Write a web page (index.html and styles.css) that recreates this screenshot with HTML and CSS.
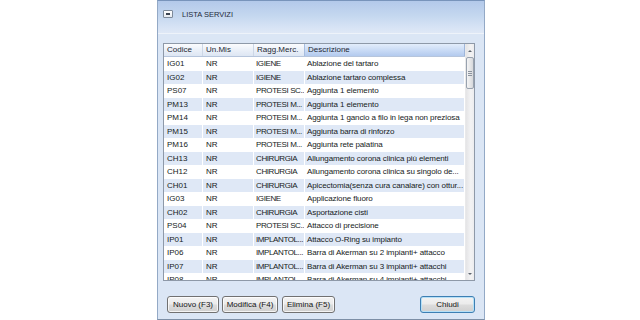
FILE: index.html
```html
<!DOCTYPE html>
<html lang="it">
<head>
<meta charset="utf-8">
<title>Lista servizi</title>
<link rel="stylesheet" href="styles.css">
</head>
<body>
<div class="win">
  <div class="titlebar">
    <span class="sysicon"><span class="bar"></span></span>
    <span class="title">LISTA SERVIZI</span>
  </div>
  <div class="content">
    <div class="list">
      <div class="grid">
        <div class="head">
          <div class="hc">Codice</div>
          <div class="hc">Un.Mis</div>
          <div class="hc">Ragg.Merc.</div>
          <div class="hc hc-active">Descrizione</div>
        </div>
        <div class="rows">
          <div class="row"><div class="c">IG01</div><div class="c">NR</div><div class="c g">IGIENE</div><div class="c d">Ablazione del tartaro</div></div>
          <div class="row alt"><div class="c">IG02</div><div class="c">NR</div><div class="c g">IGIENE</div><div class="c d">Ablazione tartaro complessa</div></div>
          <div class="row"><div class="c">PS07</div><div class="c">NR</div><div class="c g">PROTESI SC...</div><div class="c d">Aggiunta 1 elemento</div></div>
          <div class="row alt"><div class="c">PM13</div><div class="c">NR</div><div class="c g">PROTESI M...</div><div class="c d">Aggiunta 1 elemento</div></div>
          <div class="row"><div class="c">PM14</div><div class="c">NR</div><div class="c g">PROTESI M...</div><div class="c d">Aggiunta 1 gancio a filo in lega non preziosa</div></div>
          <div class="row alt"><div class="c">PM15</div><div class="c">NR</div><div class="c g">PROTESI M...</div><div class="c d">Aggiunta barra di rinforzo</div></div>
          <div class="row"><div class="c">PM16</div><div class="c">NR</div><div class="c g">PROTESI M...</div><div class="c d">Aggiunta rete palatina</div></div>
          <div class="row alt"><div class="c">CH13</div><div class="c">NR</div><div class="c g">CHIRURGIA</div><div class="c d">Allungamento corona clinica più elementi</div></div>
          <div class="row"><div class="c">CH12</div><div class="c">NR</div><div class="c g">CHIRURGIA</div><div class="c d">Allungamento corona clinica su singolo de...</div></div>
          <div class="row alt"><div class="c">CH01</div><div class="c">NR</div><div class="c g">CHIRURGIA</div><div class="c d">Apicectomia(senza cura canalare) con ottur...</div></div>
          <div class="row"><div class="c">IG03</div><div class="c">NR</div><div class="c g">IGIENE</div><div class="c d">Applicazione fluoro</div></div>
          <div class="row alt"><div class="c">CH02</div><div class="c">NR</div><div class="c g">CHIRURGIA</div><div class="c d">Asportazione cisti</div></div>
          <div class="row"><div class="c">PS04</div><div class="c">NR</div><div class="c g">PROTESI SC...</div><div class="c d">Attacco di precisione</div></div>
          <div class="row alt"><div class="c">IP01</div><div class="c">NR</div><div class="c g">IMPLANTOL...</div><div class="c d">Attacco O-Ring su impianto</div></div>
          <div class="row"><div class="c">IP06</div><div class="c">NR</div><div class="c g">IMPLANTOL...</div><div class="c d">Barra di Akerman su 2 impianti+ attacco</div></div>
          <div class="row alt"><div class="c">IP07</div><div class="c">NR</div><div class="c g">IMPLANTOL...</div><div class="c d">Barra di Akerman su 3 impianti+ attacchi</div></div>
          <div class="row"><div class="c">IP08</div><div class="c">NR</div><div class="c g">IMPLANTOL...</div><div class="c d">Barra di Akerman su 4 impianti+ attacchi</div></div>
        </div>
      </div>
      <div class="vscroll">
        <div class="arrow"><span class="tri-up"></span></div>
        <div class="thumb"><span class="grip"></span></div>
        <div class="track"></div>
        <div class="arrow"><span class="tri-down"></span></div>
      </div>
    </div>
    <div class="buttons">
      <button class="btn btn-nuovo">Nuovo (F3)</button>
      <button class="btn btn-modifica">Modifica (F4)</button>
      <button class="btn btn-elimina">Elimina (F5)</button>
      <span class="spacer"></span>
      <button class="btn btn-chiudi">Chiudi</button>
    </div>
  </div>
</div>
</body>
</html>
```
FILE: styles.css
```css
* { box-sizing: border-box; }
html, body { margin: 0; }
body {
  width: 640px;
  height: 320px;
  overflow: hidden;
  background: #ffffff;
  padding-left: 157px;
  font-family: "Liberation Sans", Arial, sans-serif;
  color: #1b1b1b;
}
.win {
  width: 328px;
  height: 320px;
  display: flex;
  flex-direction: column;
  border: 1px solid #93a9c6;
  border-top-color: #7894bb;
  border-bottom-color: #7d8fa6;
  background: #dbe6f5;
}
.titlebar {
  flex: none;
  height: 33px;
  display: flex;
  align-items: flex-start;
  gap: 9px;
  padding: 9px 0 0 5px;
  background: linear-gradient(#b3c9ea, #c4d7ef 45%, #d8e4f5 85%, #dfe8f6);
  border-bottom: 1px solid #eef3fa;
}
.sysicon {
  width: 10px;
  height: 8px;
  border: 1px solid #7d8a99;
  border-radius: 1px;
  background: linear-gradient(#ffffff, #e6ebf1);
  display: flex;
  align-items: center;
  justify-content: center;
}
.sysicon .bar {
  width: 4px;
  height: 2px;
  border-top: 1px solid #3b4450;
  border-bottom: 1px solid #3b4450;
}
.title {
  font-size: 7.5px;
  line-height: 9px;
  color: #1f2b3b;
}
.content {
  flex: 1;
  display: flex;
  flex-direction: column;
  padding: 9px 9px 7px 5px;
}
.list {
  height: 238px;
  display: flex;
  border: 1px solid #8e99a8;
  background: #ffffff;
  overflow: hidden;
}
.grid {
  flex: 1;
  min-width: 0;
  display: flex;
  flex-direction: column;
  overflow: hidden;
}
.head, .row {
  display: grid;
  grid-template-columns: 39px 51px 51px 1fr;
}
.head {
  height: 13px;
  flex: none;
  background: linear-gradient(#fbfcfe, #e9eff8 55%, #dde6f3);
  border-bottom: 1px solid #b6c5dc;
}
.hc {
  font-size: 8px;
  line-height: 12px;
  padding-left: 3px;
  border-right: 1px solid #cdd7e6;
  white-space: nowrap;
  overflow: hidden;
  color: #1d2733;
}
.hc-active {
  background: linear-gradient(#e3edfb, #c8daf5 55%, #b3caee);
  border-right: 1px solid #9fb6da;
  border-left: 1px solid #a7bddf;
  margin-left: -1px;
  padding-left: 3px;
}
.rows {
  flex: 1;
  overflow: hidden;
}
.row {
  height: 13.5px;
  background: #ffffff;
}
.row.alt {
  background: #dfe8f6;
}
.c {
  font-size: 8px;
  line-height: 13.5px;
  padding-left: 3px;
  white-space: nowrap;
  overflow: hidden;
  border-right: 1px solid #ffffff;
  color: #161b22;
}
.c.g {
  letter-spacing: -0.4px;
  padding-left: 2px;
}
.c.d {
  letter-spacing: -0.1px;
  padding-left: 2px;
}
.vscroll {
  flex: none;
  width: 9px;
  display: flex;
  flex-direction: column;
  background: linear-gradient(90deg, #e4e4e6, #f3f3f4 60%, #ececee);
  border-left: 1px solid #e9e9ea;
}
.arrow {
  height: 13px;
  flex: none;
  display: flex;
  align-items: center;
  justify-content: center;
}
.tri-up {
  width: 0; height: 0;
  border-left: 2px solid transparent;
  border-right: 2px solid transparent;
  border-bottom: 2px solid #5e6670;
}
.tri-down {
  width: 0; height: 0;
  border-left: 2px solid transparent;
  border-right: 2px solid transparent;
  border-top: 2px solid #5e6670;
}
.thumb {
  height: 32px;
  flex: none;
  border: 1px solid #98a2af;
  border-radius: 2px;
  background: linear-gradient(90deg, #f4f4f5, #e6e7e9 50%, #d6d8dc);
  display: flex;
  align-items: center;
  justify-content: center;
}
.grip {
  width: 4px;
  height: 5px;
  background: repeating-linear-gradient(#8b939e 0 1px, transparent 1px 2px);
}
.track { flex: 1; }
.buttons {
  margin-top: 15px;
  display: flex;
  align-items: center;
  padding-left: 4px;
  gap: 3px;
}
.spacer { flex: 1; }
.btn {
  height: 17px;
  padding: 0;
  border: 1px solid #717171;
  border-radius: 3px;
  background: linear-gradient(#f3f3f3, #ebebeb 48%, #dcdcdc 52%, #d0d0d0);
  box-shadow: inset 0 0 0 1px rgba(255,255,255,0.75);
  font-family: "Liberation Sans", Arial, sans-serif;
  font-size: 8px;
  color: #141414;
  line-height: 15px;
}
.btn-nuovo { width: 52px; }
.btn-modifica { width: 56px; }
.btn-elimina { width: 53px; margin-left: 1px; }
.btn-chiudi {
  width: 55px;
  border-color: #3d7fb3;
  box-shadow: inset 0 0 0 1px #b6e0f7;
}
```
